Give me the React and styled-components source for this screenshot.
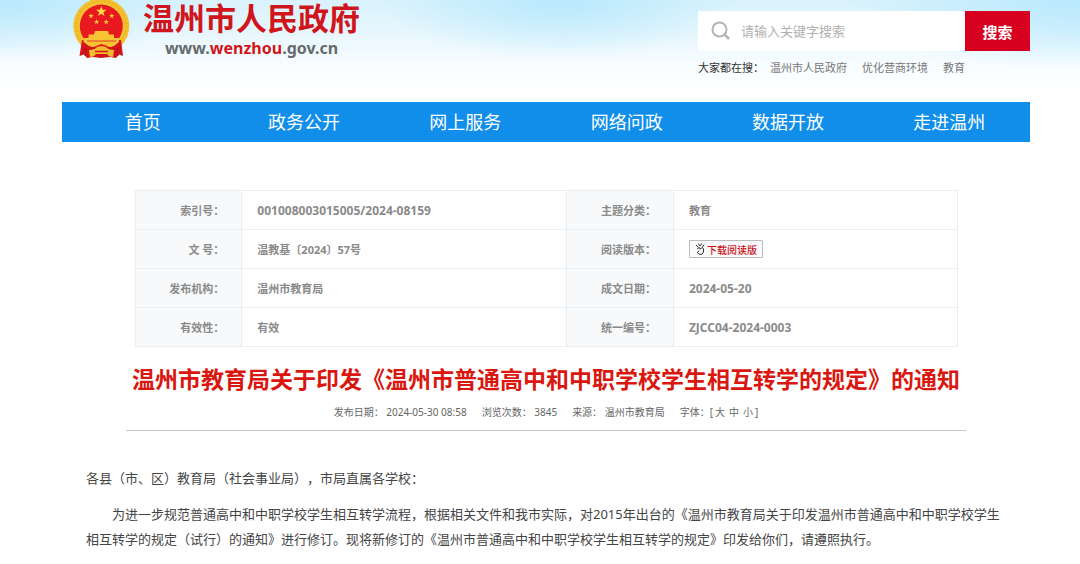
import React, {useState} from 'react';
import styled, {createGlobalStyle} from 'styled-components';

const GlobalStyle = createGlobalStyle`
* { box-sizing:border-box; }
body {
  margin:0;
  background:#fff;
  color:#444;
  font-family:"Noto Sans", "Noto Sans CJK SC", sans-serif;
  font-size:13px;
  text-spacing-trim:space-all;
}
button, input { font-family:inherit; }
a { color:inherit; text-decoration:none; }
`

const Page = styled.div`
padding:0 50px 24px 62px;
background:
  radial-gradient(ellipse 180px 60px at 52% 0, #b8e9fd 0%, rgba(184,233,253,0) 100%),
  radial-gradient(ellipse 240px 70px at 100% 0, #b8e9fd 0%, rgba(184,233,253,0) 100%),
  radial-gradient(ellipse 200px 60px at 0% 0, #b8e9fd 0%, rgba(184,233,253,0) 100%),
  linear-gradient(#d8f2fc 0, #e9f7fd 35px, #f8fdff 66px, #fff 90px);
`

const Header = styled.header`
display:flex;
justify-content:space-between;
align-items:flex-start;
height:102px;
`

const Brand = styled.a`
display:flex;
gap:13px;
padding-left:11px;
`

const BrandText = styled.div`
display:flex;
flex-direction:column;
align-items:center;
`

const SiteName = styled.span`
font-family:"Liberation Sans", "Noto Sans CJK SC", sans-serif;
font-size:31px;
line-height:40px;
font-weight:700;
color:#d0161c;
`

const SiteUrl = styled.span`
font-size:16px;
line-height:16px;
font-weight:700;
color:#666b6e;

em {
  font-style:normal;
  color:#d0161c;
}
`

const SearchArea = styled.div`
width:332px;
padding-top:11px;
`

const SearchForm = styled.form`
display:flex;
height:40px;
background:#fff;
`

const SearchLabel = styled.label`
display:flex;
flex:1;
align-items:center;
gap:10px;
padding-left:13px;
`

const SearchInput = styled.input`
flex:1;
min-width:0;
border:0;
outline:0;
padding:0;
background:transparent;
font-size:13px;
color:#444;

&::placeholder { color:#b0b0b0; }
`

const SearchButton = styled.button`
width:65px;
border:0;
background:#d7001f;
color:#fff;
font-size:15px;
font-weight:700;
`

const HotWords = styled.div`
display:flex;
gap:15px;
padding-top:8px;
font-size:11px;
line-height:18px;
color:#777;
`

const HotTitle = styled.span`
margin-right:-9px;
color:#333;
`

const Nav = styled.nav`
display:flex;
background:#108ee9;
`

const NavLink = styled.a`
flex:1;
text-align:center;
font-size:18px;
line-height:40px;
color:#fff;
`

const Article = styled.main`
padding:48px 24px 0;
`

const InfoTable = styled.table`
width:calc(100% - 97px);
margin:0 auto;
border:1px solid #eaf0f2;
border-collapse:collapse;
table-layout:fixed;
color:#8a8a8a;
`

const Label = styled.th`
width:13%;
height:39px;
padding:0 17px 0 0;
border:1px solid #eaf0f2;
background:#f7f9fb;
text-align:right;
font-size:11px;
font-weight:700;
`

const Value = styled.td`
width:${props => props.$width};
padding:0 0 0 15px;
border:1px solid #eaf0f2;
font-size:${props => props.$latin ? 12 : 11}px;
font-weight:700;
`

const DownloadButton = styled.button`
display:flex;
align-items:center;
gap:2px;
height:18px;
padding:0 5px;
border:1px solid #bbb;
border-radius:1px;
background:#fafafa;
color:#c8141e;
font-size:10px;
font-weight:500;
`

const TitleBlock = styled.header`
margin:16px 40px 0;
border-bottom:1px solid #c4c4c4;
text-align:center;
`

const Title = styled.h1`
margin:0;
font-size:23px;
line-height:32px;
font-weight:700;
white-space:nowrap;
color:#d9170f;
`

const Meta = styled.div`
display:flex;
justify-content:center;
gap:15px;
padding:9px 0 10px;
font-size:10px;
line-height:16px;
color:#666;
`

const SizeButton = styled.button`
border:0;
padding:0;
margin:0 2px;
background:transparent;
font-size:10px;
line-height:16px;
color:inherit;
cursor:pointer;
`

const Content = styled.div`
padding-top:35px;
font-size:${props => props.$size}px;
line-height:25px;
`

const Paragraph = styled.p`
margin:0 0 11px;
text-indent:${props => props.$indent ? '2em' : 0};
`

const navItems = ['首页', '政务公开', '网上服务', '网络问政', '数据开放', '走进温州']

const hotWords = ['温州市人民政府', '优化营商环境', '教育']

const infoRows = [
  [{label: '索引号：', value: '001008003015005/2024-08159', latin: true}, {label: '主题分类：', value: '教育'}],
  [{label: '文 号：', value: '温教基〔2024〕57号'}, {label: '阅读版本：', download: '下载阅读版'}],
  [{label: '发布机构：', value: '温州市教育局'}, {label: '成文日期：', value: '2024-05-20', latin: true}],
  [{label: '有效性：', value: '有效'}, {label: '统一编号：', value: 'ZJCC04-2024-0003', latin: true}],
]

const fontSizes = [['大', 16], ['中', 13], ['小', 12]]

const starPoints = (cx, cy, r) =>
  Array.from({length: 10}, (_, i) => {
    const radius = i % 2 ? r * 0.4 : r
    const angle = Math.PI * (i / 5 - 0.5)
    return `${(cx + radius * Math.cos(angle)).toFixed(2)},${(cy + radius * Math.sin(angle)).toFixed(2)}`
  }).join(' ')

const Emblem = () => (
  <svg width="57" height="60" viewBox="0 0 57 60" aria-hidden="true">
    <circle cx="28.3" cy="26" r="28" fill="#f3c02f" />
    <circle cx="28.3" cy="26" r="25" fill="none" stroke="#e3a922" strokeWidth="1" strokeDasharray="2 2" />
    <path d="M9 40 L48 40 L50 56 L46 54.5 L43 58 L37 57 L28 58 L20 57 L14 58 L11 54.5 L6.5 56Z" fill="#d3141c" />
    <circle cx="28.3" cy="26" r="21.5" fill="#e8191f" />
    <polygon points={starPoints(28.3, 11.5, 5.5)} fill="#ffdf45" />
    <polygon points={starPoints(18, 16, 2.8)} fill="#ffd23c" />
    <polygon points={starPoints(23.6, 22, 2.8)} fill="#ffd23c" />
    <polygon points={starPoints(33.2, 22, 2.8)} fill="#ffd23c" />
    <polygon points={starPoints(38.8, 16, 2.8)} fill="#ffd23c" />
    <path d="M22 31 H35 L36 34.5 H41 V38 H15.5 V34.5 H21Z" fill="#f6c433" />
    <path d="M10.5 38 H46 V42 L41 46 Q36 48 33 45.5 L28.5 44 L24 45.5 Q21 48 16 46 L10.5 42Z" fill="#f6c433" />
    <path d="M14 41 H43" stroke="#e0402a" strokeWidth="1" />
    <path d="M16 50 Q22 50 24 47 L28.5 46 L33 47 Q35 50 41 50 L40 57 Q36 57 34 54 H23 Q21 57 17 57Z" fill="#f1bd2c" />
    <path d="M22 51.5 H35" stroke="#d3141c" strokeWidth="1.5" />
    <path d="M12 48 Q14 53 12 56 M45 48 Q43 53 45 56" fill="none" stroke="#b01018" strokeWidth="1" />
  </svg>
)

const SearchIcon = () => (
  <svg width="20" height="20" viewBox="0 0 20 20" fill="none" stroke="#b5b5b5" strokeWidth="2" aria-hidden="true">
    <circle cx="8.5" cy="8.5" r="7" />
    <path d="M13.5 13.5 L18 18" strokeWidth="2.5" />
  </svg>
)

const HandIcon = () => (
  <svg width="10" height="12" viewBox="0 0 10 12" fill="none" stroke="#333" strokeWidth="1" aria-hidden="true">
    <path d="M1 2 L3 4 M3.5 .5 L4.5 3 M6.5 .5 L5.5 3 M9 1.5 L7.5 4" />
    <path d="M2 5.5 L4.5 4.5 L5 6 L7.5 4.5 L8.5 6 V9 L7 11.3 H4 L2.5 9.5 L4 7.5" />
  </svg>
)

const SiteHeader = () => (
  <Header>
    <Brand href="#">
      <Emblem />
      <BrandText>
        <SiteName>温州市人民政府</SiteName>
        <SiteUrl>www.<em>wenzhou</em>.gov.cn</SiteUrl>
      </BrandText>
    </Brand>
    <SearchArea>
      <SearchForm onSubmit={e => e.preventDefault()}>
        <SearchLabel>
          <SearchIcon />
          <SearchInput type="text" aria-label="搜索" placeholder="请输入关键字搜索" />
        </SearchLabel>
        <SearchButton type="submit">搜索</SearchButton>
      </SearchForm>
      <HotWords>
        <HotTitle>大家都在搜：</HotTitle>
        {hotWords.map(word => <a href="#" key={word}>{word}</a>)}
      </HotWords>
    </SearchArea>
  </Header>
)

const Info = () => (
  <InfoTable>
    <tbody>
      {infoRows.map(row =>
        <tr key={row[0].label}>
          {row.map((cell, i) =>
            <React.Fragment key={cell.label}>
              <Label scope="row">{cell.label}</Label>
              <Value $width={i === 0 ? '39.5%' : 'auto'} $latin={cell.latin}>
                {cell.download
                  ? <DownloadButton type="button"><HandIcon />{cell.download}</DownloadButton>
                  : cell.value}
              </Value>
            </React.Fragment>)}
        </tr>)}
    </tbody>
  </InfoTable>
)

export default function App() {
  const [size, setSize] = useState(13)

  return <>
    <GlobalStyle />
    <Page>
      <SiteHeader />
      <Nav>
        {navItems.map(item => <NavLink href="#" key={item}>{item}</NavLink>)}
      </Nav>
      <Article>
        <Info />
        <TitleBlock>
          <Title>温州市教育局关于印发《温州市普通高中和中职学校学生相互转学的规定》的通知</Title>
          <Meta>
            <span>发布日期： 2024-05-30 08:58</span>
            <span>浏览次数： 3845</span>
            <span>来源： 温州市教育局</span>
            <span>
              字体：[
              {fontSizes.map(([name, px]) =>
                <SizeButton type="button" key={name} onClick={() => setSize(px)}>{name}</SizeButton>)}
              ]
            </span>
          </Meta>
        </TitleBlock>
        <Content $size={size}>
          <Paragraph>各县（市、区）教育局（社会事业局），市局直属各学校：</Paragraph>
          <Paragraph $indent>
            为进一步规范普通高中和中职学校学生相互转学流程，根据相关文件和我市实际，对2015年出台的《温州市教育局关于印发温州市普通高中和中职学校学生相互转学的规定（试行）的通知》进行修订。现将新修订的《温州市普通高中和中职学校学生相互转学的规定》印发给你们，请遵照执行。
          </Paragraph>
        </Content>
      </Article>
    </Page>
  </>
}
